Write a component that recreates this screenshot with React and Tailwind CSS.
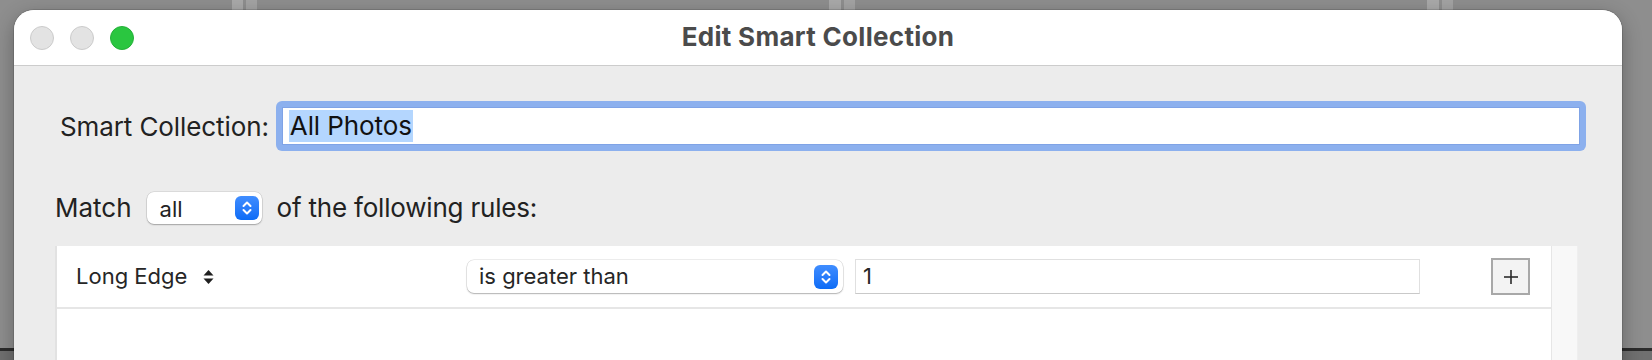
import React from 'react';

const Stepper = () => (
    <div className="w-[24px] h-[24px] shrink-0 rounded-[6px] bg-gradient-to-b from-[#3f8dff] to-[#0b6cf6] flex items-center justify-center">
        <svg width="12" height="18" viewBox="0 0 12 18" fill="none" stroke="white" strokeWidth="2" strokeLinecap="round" strokeLinejoin="round">
            <path d="M2.5 7l3.5-3.5 3.5 3.5" />
            <path d="M2.5 11l3.5 3.5 3.5-3.5" />
        </svg>
    </div>
);

const Light = ({ className }) => (
    <div className={`w-[24px] h-[24px] rounded-full border ${className}`} />
);

const App = () => {
    return (
        <div className="relative w-[1652px] h-[360px] overflow-hidden bg-[#8e8e8e] font-['Inter','Liberation_Sans',sans-serif] text-[#222]">
            {/* windows behind: little scroller strips above the sheet */}
            <div className="absolute top-0 left-[232px] w-[25px] h-[10px] flex gap-[3px]">
                <div className="flex-1 bg-[#a9a9a9]" />
                <div className="flex-1 bg-[#a3a3a3]" />
            </div>
            <div className="absolute top-0 left-[829px] w-[26px] h-[10px] flex gap-[3px]">
                <div className="flex-1 bg-[#a9a9a9]" />
                <div className="flex-1 bg-[#a3a3a3]" />
            </div>
            <div className="absolute top-0 left-[1427px] w-[26px] h-[10px] flex gap-[3px]">
                <div className="flex-1 bg-[#a9a9a9]" />
                <div className="flex-1 bg-[#a3a3a3]" />
            </div>
            <div className="absolute left-0 right-0 top-[348px] h-[3px] bg-[#2c2c2c]" />
            <div className="absolute left-0 right-0 top-[351px] bottom-0 bg-[#707070]" />

            <div className="relative z-10 pt-[10px] pl-[14px] pr-[30px]">
                {/* Window */}
                <div className="h-[420px] flex flex-col rounded-t-[20px] overflow-hidden bg-[#ececec] shadow-[0_0_0_1px_rgba(0,0,0,0.12),0_6px_20px_rgba(0,0,0,0.3)]">
                    {/* Title bar */}
                    <div className="h-[56px] shrink-0 bg-white border-b border-[#cccccc] grid grid-cols-[1fr_auto_1fr] items-center">
                        <div className="flex items-center gap-[16px] pl-[16px]">
                            <Light className="bg-[#e3e3e3] border-[#cbcbcb]" />
                            <Light className="bg-[#e3e3e3] border-[#cbcbcb]" />
                            <Light className="bg-[#2ac640] border-[#25b039]" />
                        </div>
                        <div className="text-[26px] font-bold text-[#4b4b4b] -mt-[3px] tracking-[0.3px]">Edit Smart Collection</div>
                        <div />
                    </div>

                    {/* Content */}
                    <div className="flex-1 flex flex-col">
                        {/* Name row */}
                        <div className="flex items-center mt-[35px] pl-[46px] pr-[36px]">
                            <span className="text-[26px] mr-[7px] tracking-[-0.1px]">Smart Collection:</span>
                            <div className="flex-1 h-[50px] rounded-[6px] bg-[#8cb0ee] p-[6px]">
                                <div className="h-full bg-white flex items-center pl-[6px] border border-[#7fa3e6]">
                                    <span className="text-[26px] text-[#111] bg-[#b4d6fe] leading-[32px] px-[1px] tracking-[-0.1px]">All Photos</span>
                                </div>
                            </div>
                        </div>

                        {/* Match row */}
                        <div className="flex items-center mt-[37px] pl-[41px]">
                            <span className="text-[26px] mr-[15px]">Match</span>
                            <div className="w-[115px] h-[32px] bg-white rounded-[7px] shadow-[0_0_0_0.5px_rgba(0,0,0,0.14),0_1px_1.5px_rgba(0,0,0,0.25)] flex items-center pl-[13px] pr-[3px]">
                                <span className="flex-1 text-[22px] pt-[4px]">all</span>
                                <Stepper />
                            </div>
                            <span className="text-[26px] ml-[15px] tracking-[-0.2px]">of the following rules:</span>
                        </div>

                        {/* Rules table */}
                        <div className="flex-1 flex mt-[19px] ml-[41px] mr-[44px]">
                            <div className="flex-1 flex flex-col bg-white border-l-2 border-[#e2e2e2]">
                                <div className="h-[63px] flex items-center pl-[19px] pr-[21px] border-b-2 border-[#e6e6e6]">
                                    <div className="w-[391px] flex items-center">
                                        <span className="text-[22px] text-[#262626]">Long Edge</span>
                                        <svg className="ml-[16px]" width="11" height="16" viewBox="0 0 11 16" fill="#1f1f1f">
                                            <path d="M5.5 1L10.5 6.5H0.5Z" />
                                            <path d="M5.5 15L10.5 9.5H0.5Z" />
                                        </svg>
                                    </div>
                                    <div className="w-[376px] h-[33px] bg-white rounded-[7px] shadow-[0_0_0_0.5px_rgba(0,0,0,0.14),0_1px_1.5px_rgba(0,0,0,0.25)] flex items-center pl-[12px] pr-[5px]">
                                        <span className="flex-1 text-[22px] text-[#262626]">is greater than</span>
                                        <Stepper />
                                    </div>
                                    <div className="w-[565px] h-[35px] ml-[12px] border border-[#e0e0e0] border-b-[#c9c9c9] flex items-center pl-[7px]">
                                        <span className="text-[22px] text-[#262626]">1</span>
                                    </div>
                                    <div className="flex-1" />
                                    <div className="w-[39px] h-[37px] border-2 border-[#a8a8a8] bg-[#f3f3f3] flex items-center justify-center">
                                        <svg width="14" height="14" viewBox="0 0 14 14" stroke="#2a2a2a" strokeWidth="1.6">
                                            <line x1="7" y1="0" x2="7" y2="14" />
                                            <line x1="0" y1="7" x2="14" y2="7" />
                                        </svg>
                                    </div>
                                </div>
                                <div className="flex-1" />
                            </div>
                            <div className="w-[27px] bg-[#f8f8f8] border-l border-[#e6e6e6] border-r border-r-[#efefef]" />
                        </div>
                    </div>
                </div>
            </div>
        </div>
    );
};

export default App;
